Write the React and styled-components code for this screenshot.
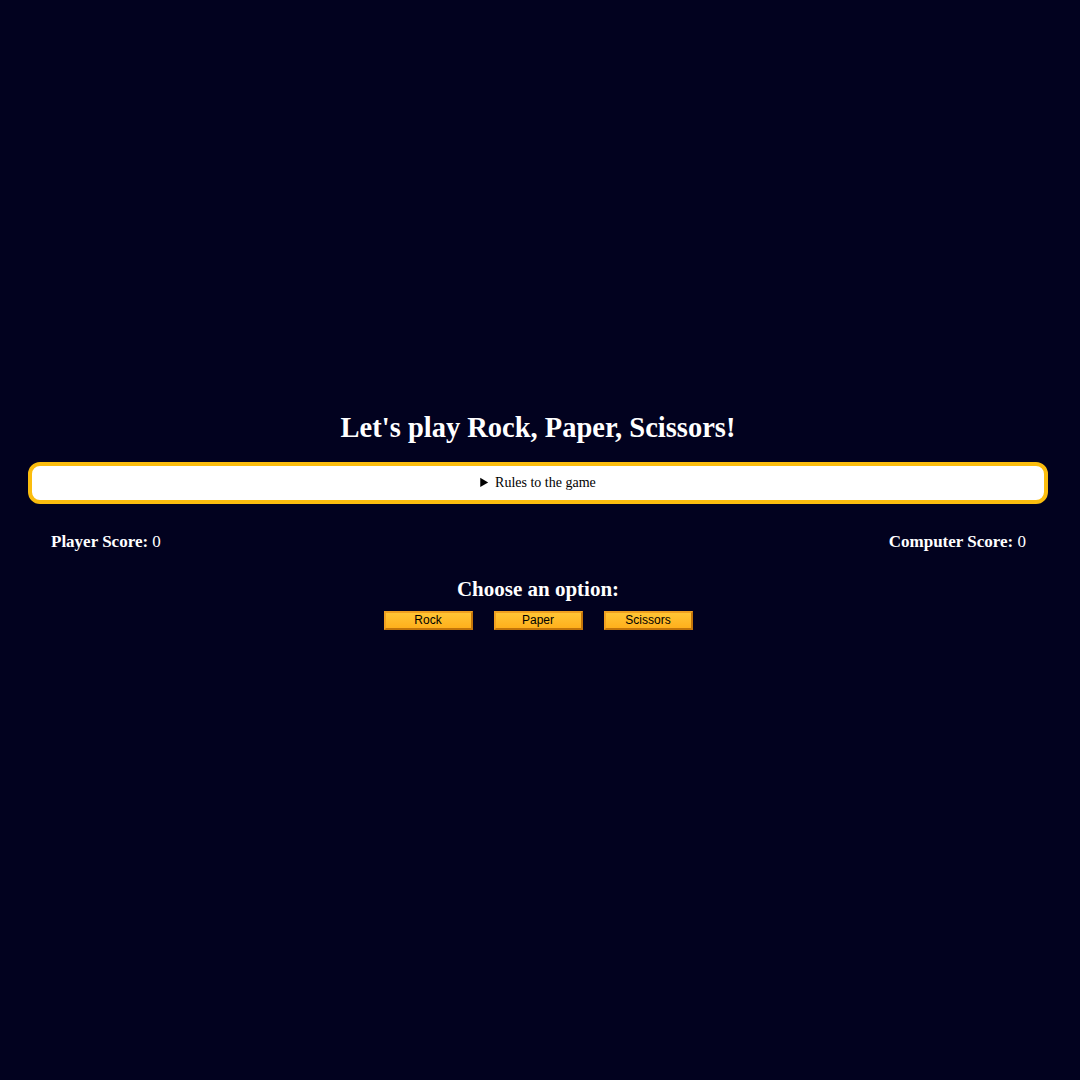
import React from "react";
import styled, { createGlobalStyle } from "styled-components";

const Global = createGlobalStyle`
  html, body { margin: 0; padding: 0; background: #02021f; }
  body { font-family: "Liberation Serif", "Times New Roman", serif; color: #ffffff; }
`;

const Page = styled.main`
  min-height: 100vh;
  box-sizing: border-box;
  display: flex;
  flex-direction: column;
  justify-content: center;
  padding: 0 32px 39px 28px;
`;

const Title = styled.h1`
  margin: 0 0 18px;
  text-align: center;
  font-size: 28.5px;
  line-height: 32px;
  font-weight: bold;
`;

const Rules = styled.details`
  background: #ffffff;
  color: #000000;
  border: 4px solid #fbbd0e;
  border-radius: 12px;
  padding: 8px 0;
`;

const Summary = styled.summary`
  text-align: center;
  font-size: 14px;
  line-height: 18px;
  cursor: pointer;
`;

const Scores = styled.div`
  display: flex;
  justify-content: space-between;
  padding: 0 22px 0 23px;
  margin-top: 28px;
  font-size: 17px;
  line-height: 20px;
`;

const Score = styled.p`
  margin: 0;
  font-weight: bold;
`;

const Value = styled.span`
  font-weight: normal;
`;

const Choose = styled.h3`
  margin: 25px 0 10px;
  text-align: center;
  font-size: 21px;
  line-height: 24px;
`;

const Buttons = styled.div`
  display: flex;
  justify-content: center;
  gap: 21px;
`;

const Option = styled.button`
  width: 89px;
  height: 19px;
  padding: 0;
  font-family: "Liberation Sans", Arial, sans-serif;
  font-size: 12px;
  color: #000;
  background: linear-gradient(#ffc535, #ffb01c);
  border: 2px solid;
  border-color: #f0a020 #c27409 #c27409 #f0a020;
`;

export default function App() {
  return (
    <>
      <Global />
      <Page>
        <Title>Let's play Rock, Paper, Scissors!</Title>
        <Rules>
          <Summary>Rules to the game</Summary>
        </Rules>
        <Scores>
          <Score>Player Score: <Value>0</Value></Score>
          <Score>Computer Score: <Value>0</Value></Score>
        </Scores>
        <Choose>Choose an option:</Choose>
        <Buttons>
          <Option>Rock</Option>
          <Option>Paper</Option>
          <Option>Scissors</Option>
        </Buttons>
      </Page>
    </>
  );
}
